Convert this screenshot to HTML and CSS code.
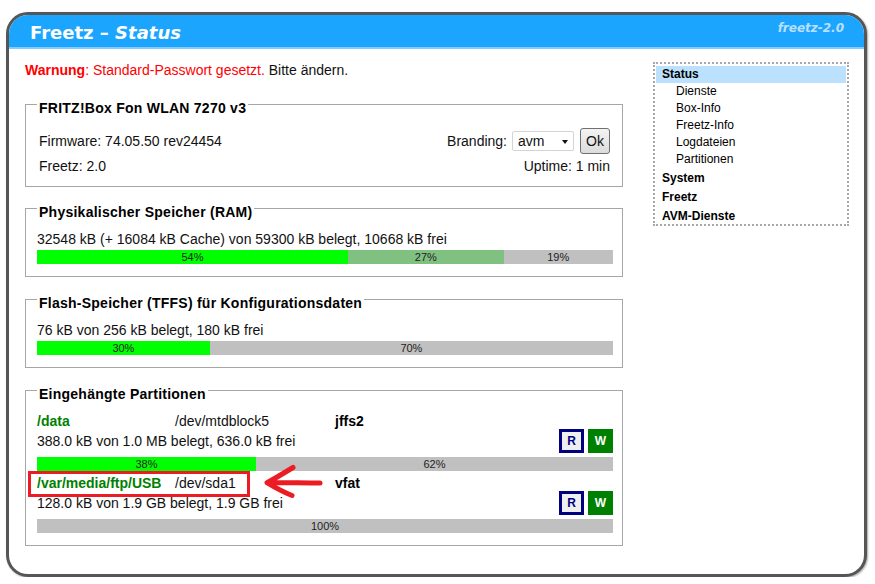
FILE: index.html
```html
<!DOCTYPE html>
<html lang="de">
<head>
<meta charset="utf-8">
<title>Freetz - Status</title>
<link rel="stylesheet" href="styles.css">
</head>
<body>
<div class="frame">
  <div class="head">
    <h1 class="title">Freetz – <em>Status</em></h1>
    <span class="ver">freetz-2.0</span>
  </div>
  <div class="content">
    <div class="main">
      <p class="warn"><b>Warnung</b>: Standard-Passwort gesetzt. <span class="plain">Bitte ändern.</span></p>

      <fieldset class="box">
        <legend>FRITZ!Box Fon WLAN 7270 v3</legend>
        <div class="info">
          <div class="cell">Firmware: 74.05.50 rev24454</div>
          <div class="cell right">
            <span>Branding:</span>
            <span class="select">avm<span class="caret"></span></span>
            <span class="btn">Ok</span>
          </div>
          <div class="cell">Freetz: 2.0</div>
          <div class="cell right">Uptime: 1 min</div>
        </div>
      </fieldset>

      <fieldset class="box">
        <legend>Physikalischer Speicher (RAM)</legend>
        <div class="line">32548 kB (+ 16084 kB Cache) von 59300 kB belegt, 10668 kB frei</div>
        <div class="bar">
          <span class="seg used" style="width:54%">54%</span>
          <span class="seg cache" style="width:27%">27%</span>
          <span class="seg free" style="width:19%">19%</span>
        </div>
      </fieldset>

      <fieldset class="box">
        <legend>Flash-Speicher (TFFS) für Konfigurationsdaten</legend>
        <div class="line">76 kB von 256 kB belegt, 180 kB frei</div>
        <div class="bar">
          <span class="seg used" style="width:30%">30%</span>
          <span class="seg free" style="width:70%">70%</span>
        </div>
      </fieldset>

      <fieldset class="box parts">
        <legend>Eingehängte Partitionen</legend>
        <div class="part">
          <div class="pname"><span class="mnt">/data</span><span class="dev">/dev/mtdblock5</span><span class="fs">jffs2</span></div>
          <div class="pinfo"><span>388.0 kB von 1.0 MB belegt, 636.0 kB frei</span><span class="rw"><span class="r">R</span><span class="w">W</span></span></div>
          <div class="bar">
            <span class="seg used" style="width:38%">38%</span>
            <span class="seg free" style="width:62%">62%</span>
          </div>
        </div>
        <div class="part">
          <div class="pname"><span class="mnt">/var/media/ftp/USB</span><span class="dev">/dev/sda1</span><span class="fs">vfat</span></div>
          <div class="pinfo"><span>128.0 kB von 1.9 GB belegt, 1.9 GB frei</span><span class="rw"><span class="r">R</span><span class="w">W</span></span></div>
          <div class="bar">
            <span class="seg free" style="width:100%">100%</span>
          </div>
        </div>
      </fieldset>
    </div>

    <nav class="menu">
      <a class="mi active" href="#">Status</a>
      <a class="si" href="#">Dienste</a>
      <a class="si" href="#">Box-Info</a>
      <a class="si" href="#">Freetz-Info</a>
      <a class="si" href="#">Logdateien</a>
      <a class="si" href="#">Partitionen</a>
      <a class="mi" href="#">System</a>
      <a class="mi" href="#">Freetz</a>
      <a class="mi" href="#">AVM-Dienste</a>
    </nav>
  </div>
</div>

<div class="mark"></div>
<svg class="arrow" width="64" height="40" viewBox="0 0 64 40">
  <path d="M58 21 C40 21 22 20.5 5 20.7 M31 5.5 C22 11 12 17 5 20.7 C12 25 21 30 30 33.5" fill="none" stroke="#ec1c24" stroke-width="5" stroke-linecap="round" stroke-linejoin="round"/>
</svg>
</body>
</html>
```

FILE: styles.css
```css
* { box-sizing: border-box; }
html, body { margin: 0; padding: 0; background: #fff; }
body {
  font-family: "Liberation Sans", Arial, sans-serif;
  font-size: 14px;
  color: #111;
  position: relative;
}

.frame {
  margin: 12px 0 0 6px;
  width: 861px;
  height: 565px;
  border: 3px solid #565656;
  border-radius: 22px;
  overflow: hidden;
  box-shadow: 1px 1px 2px rgba(0,0,0,0.35);
  background: #fff;
}

.head {
  height: 34px;
  background: #1ca5fe;
  border-bottom: 2px solid #84ccff;
  display: flex;
  justify-content: space-between;
  align-items: flex-start;
  padding: 0 20px 0 21px;
}
.title {
  margin: 7px 0 0;
  font-family: "DejaVu Sans", Verdana, sans-serif;
  font-weight: bold;
  font-size: 18px;
  line-height: 21px;
  color: #fff;
}
.title em { font-style: italic; }
.ver {
  margin-top: 6px;
  font-family: "DejaVu Sans", Verdana, sans-serif;
  font-weight: bold;
  font-style: italic;
  font-size: 12px;
  line-height: 14px;
  color: #b9e0ff;
}

.content {
  display: flex;
  gap: 30px;
  padding: 13px 15px 0 16px;
}
.main { width: 598px; }

.warn {
  margin: 0 0 14px;
  line-height: 16px;
  color: #f00;
}
.warn .plain { color: #111; }

.box {
  margin: 0 0 10px;
  padding: 0 9px 12px 11px;
  border: 1px solid #a6a6a6;
  min-width: 0;
}
.box:first-of-type { margin-bottom: 9px; }
.box legend {
  padding: 8px 2px 0;
  margin-left: 0;
  font-weight: bold;
  font-size: 14px;
  line-height: 16px;
  letter-spacing: 0.25px;
  color: #000;
}

.info {
  display: grid;
  grid-template-columns: 1fr auto;
  grid-template-rows: 26px 16px;
  row-gap: 4px;
  margin-top: 12px;
  padding: 0 3px 0 2px;
  line-height: 16px;
}
.cell { display: flex; align-items: center; }
.cell.right { justify-content: flex-end; }
.select {
  position: relative;
  display: inline-block;
  width: 62px;
  height: 20px;
  margin-left: 5px;
  padding-left: 5px;
  line-height: 18px;
  border: 1px solid #d4d4d4;
  border-radius: 2px;
  background: #fff;
}
.caret {
  position: absolute;
  right: 5px;
  top: 8px;
  width: 0;
  height: 0;
  border-left: 3.5px solid transparent;
  border-right: 3.5px solid transparent;
  border-top: 4px solid #111;
}
.btn {
  display: inline-flex;
  align-items: center;
  justify-content: center;
  width: 30px;
  height: 26px;
  margin-left: 6px;
  border: 1px solid #707070;
  border-radius: 3px;
  background: linear-gradient(#f3f3f3, #dcdcdc);
}

.line {
  margin-top: 11px;
  line-height: 16px;
}
.bar {
  display: flex;
  height: 14px;
  margin-top: 3px;
  background: #c0c0c0;
}
.seg {
  display: block;
  height: 14px;
  font-size: 11px;
  line-height: 14px;
  text-align: center;
  color: #222;
  overflow: hidden;
}
.seg.used { background: #00ff00; }
.seg.cache { background: #80c080; }
.seg.free { background: #c0c0c0; }

.parts .part:first-of-type { margin-top: 11px; }
.part .bar { margin-top: 4px; margin-bottom: 4px; }
.part:last-child .bar { margin-bottom: 0; }
.pname {
  display: grid;
  grid-template-columns: 138px 160px 1fr;
  line-height: 16px;
}
.mnt { color: #008000; font-weight: bold; }
.fs { font-weight: bold; color: #000; }
.pinfo {
  display: flex;
  justify-content: space-between;
  align-items: center;
  height: 24px;
}
.rw { display: flex; gap: 4px; }
.r, .w {
  display: flex;
  align-items: center;
  justify-content: center;
  width: 25px;
  height: 24px;
  font-weight: bold;
  font-size: 12px;
}
.r { border: 3px solid #000080; background: #efefef; color: #000080; }
.w { background: #008000; color: #fff; }

.menu {
  width: 196px;
  height: 164px;
  border: 2px dotted #a8a8a8;
  padding: 2px 1px 0 1px;
  display: flex;
  flex-direction: column;
  font-size: 12px;
}
.menu a {
  display: block;
  color: #000;
  text-decoration: none;
  line-height: 17px;
}
.menu .mi { font-weight: bold; padding-left: 6px; }
.menu .mi + .mi, .menu .si + .mi { margin-top: 2px; }
.menu .si { padding-left: 20px; }
.menu .active { background: #bbe1ff; }

.mark {
  position: absolute;
  left: 28px;
  top: 471px;
  width: 222px;
  height: 26px;
  border: 3px solid #ec1c24;
}
.arrow {
  position: absolute;
  left: 262px;
  top: 462px;
}
```
